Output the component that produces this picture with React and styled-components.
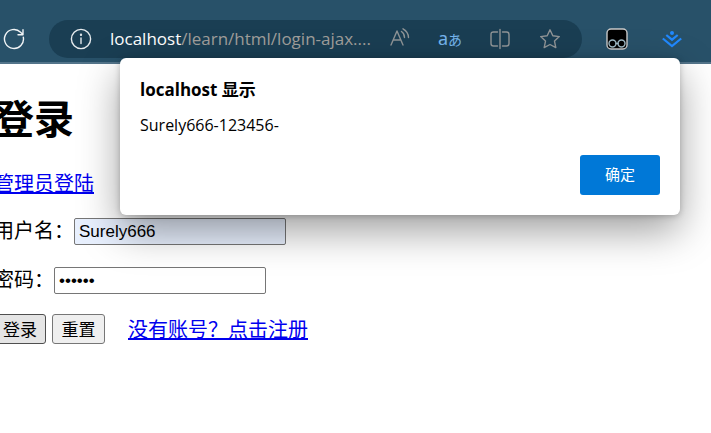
import React from "react";
import styled, { createGlobalStyle } from "styled-components";

const GlobalStyle = createGlobalStyle`
  * { box-sizing: border-box; }
  body {
    margin: 0;
    background: #fff;
    color: #000;
    font-family: "Open Sans", "Noto Sans CJK SC", sans-serif;
    overflow: hidden;
  }
`;

const Browser = styled.div`
  position: relative;
  min-height: 100vh;
`;

const Toolbar = styled.header`
  display: flex;
  align-items: center;
  height: 64px;
  padding: 16px 12px 0 0;
  background: #285169;
  border-bottom: 2px solid #53748a;
`;

const IconButton = styled.button`
  display: flex;
  flex: none;
  align-items: center;
  justify-content: center;
  width: ${(p) => p.$width}px;
  height: 38px;
  padding: 0;
  border: 0;
  background: none;
  color: ${(p) => p.$color || "#8f9496"};
`;

const AddressBar = styled.div`
  display: flex;
  flex: 1;
  align-items: center;
  min-width: 0;
  height: 38px;
  margin: 0 8px 0 21px;
  padding: 0 7px;
  border-radius: 19px;
  background: #1a3e53;
`;

const Url = styled.div`
  flex: 1;
  min-width: 0;
  margin-left: 4px;
  overflow: hidden;
  white-space: nowrap;
  font-family: "Open Sans", sans-serif;
  font-size: 17px;
  line-height: 38px;
  color: #a09e9b;
`;

const Host = styled.span`
  color: #fff;
`;

const Translate = styled.span`
  font-family: "Noto Sans", "Noto Sans CJK JP", sans-serif;
  font-size: 18px;
  line-height: 24px;
`;

const Small = styled.span`
  font-size: 14px;
`;

const Page = styled.main`
  margin-left: -6px;
  padding-top: 28px;
  font-family: "Noto Sans CJK SC", sans-serif;
  font-size: 20px;
  line-height: 26px;
`;

const Title = styled.h1`
  margin: 0 0 28px;
  font-size: 40px;
  line-height: 50px;
`;

const PageLink = styled.a`
  color: #0000ee;
  text-decoration: underline;
  text-decoration-thickness: 2px;
`;

const Form = styled.form`
  display: flex;
  flex-direction: column;
  gap: 22px;
  margin-top: 22px;
`;

const Field = styled.div`
  display: flex;
  align-items: flex-start;
  height: 27px;
  line-height: 24px;
`;

const TextInput = styled.input`
  width: 212px;
  height: 27px;
  padding: 1px 4px;
  border: 1px solid #767676;
  border-radius: 2px;
  background: ${(p) => (p.$filled ? "#e8f0fe" : "#fff")};
  color: #000;
  font-family: "Liberation Sans", sans-serif;
  font-size: 17px;
`;

const Actions = styled.div`
  display: flex;
  align-items: center;
  gap: 6px;
  margin-top: -2px;
`;

const FormButton = styled.button`
  width: ${(p) => (p.$active ? 52 : 53)}px;
  height: 30px;
  padding: 0;
  border: 1px solid ${(p) => (p.$active ? "#4f4f4f" : "#767676")};
  border-radius: 3px;
  background: ${(p) => (p.$active ? "#e5e5e5" : "#efefef")};
  color: #000;
  font-family: "Noto Sans CJK SC", sans-serif;
  font-size: 17px;
  line-height: 26px;
`;

const RegisterLink = styled(PageLink)`
  margin-left: 17px;
`;

const Overlay = styled.div`
  position: absolute;
  top: 58px;
  right: 31px;
  left: 120px;
`;

const Dialog = styled.section`
  padding: 20px;
  border-radius: 6px;
  background: #fff;
  box-shadow: 0 16px 40px rgba(0, 0, 0, 0.38), 0 1px 6px rgba(0, 0, 0, 0.22);
`;

const DialogTitle = styled.h2`
  margin: 0;
  font-size: 17px;
  line-height: 24px;
`;

const Message = styled.p`
  margin: 12px 0 19px;
  font-size: 16px;
  line-height: 22px;
`;

const DialogActions = styled.div`
  display: flex;
  justify-content: flex-end;
`;

const Confirm = styled.button`
  width: 80px;
  height: 40px;
  padding: 0 0 3px;
  border: 0;
  border-radius: 3px;
  background: #0078d7;
  color: #fff;
  font-family: "Noto Sans CJK SC", sans-serif;
  font-size: 15px;
`;

const Icon = ({ size = 22, children }) => (
  <svg
    width={size}
    height={size}
    viewBox={`0 0 ${size} ${size}`}
    fill="none"
    stroke="currentColor"
    strokeWidth="1.4"
    strokeLinecap="round"
    strokeLinejoin="round"
    aria-hidden="true"
  >
    {children}
  </svg>
);

export default function App() {
  return (
    <>
      <GlobalStyle />
      <Browser>
        <Toolbar>
          <IconButton $width={28} $color="#f1f4f6" aria-label="刷新">
            <Icon>
              <path d="M20.3 9.2A9.5 9.5 0 1 1 17.6 4.2L20 6.5M20 1.8v5h-5" />
            </Icon>
          </IconButton>
          <AddressBar>
            <IconButton $width={50} $color="#e6ebee" aria-label="站点信息">
              <Icon>
                <circle cx="11" cy="11" r="9.6" />
                <path d="M11 10v5.5" />
                <circle cx="11" cy="6.8" r=".5" fill="currentColor" />
              </Icon>
            </IconButton>
            <Url>
              <Host>localhost</Host>/learn/html/login-ajax....
            </Url>
            <IconButton $width={50} aria-label="大声朗读">
              <Icon>
                <path d="M2 17L8 3L14 17M4.200 12h7.600M12.500 3.500Q15.500 5.500 15.500 9.500M14 .8Q19.500 4 19.500 9.500" />
              </Icon>
            </IconButton>
            <IconButton $width={50} $color="#76b5ed" aria-label="翻译">
              <Translate>
                a<Small>あ</Small>
              </Translate>
            </IconButton>
            <IconButton $width={50} aria-label="分屏">
              <Icon>
                <path d="M8.500 4H4.500Q2 4 2 6.500v9Q2 18 4.500 18h4M13.500 4h4Q20 4 20 6.500v9Q20 18 17.500 18h-4M11 1.500v19" />
              </Icon>
            </IconButton>
            <IconButton $width={50} aria-label="收藏">
              <Icon>
                <path d="M11 1.800l2.800 6 6.500.8-4.800 4.500 1.300 6.500L11 16.500l-5.800 3.100 1.300-6.500L1.700 8.600l6.500-.8z" />
              </Icon>
            </IconButton>
          </AddressBar>
          <IconButton $width={54} aria-label="脚本扩展">
            <Icon>
              <rect x="1" y="1" width="20" height="20" rx="4" fill="#000" stroke="#c9c9c9" />
              <circle cx="6.500" cy="15.500" r="3.500" stroke="#9fb9c4" />
              <circle cx="15.500" cy="15.500" r="3.500" stroke="#9fb9c4" />
              <path d="M10 15.500h2" stroke="#9fb9c4" />
            </Icon>
          </IconButton>
          <IconButton $width={55} $color="#2189ff" aria-label="下载扩展">
            <Icon>
              <g strokeWidth="2.200" strokeLinecap="butt" strokeLinejoin="miter">
                <path d="M1.800 10.500L11 18l9.200-7.500M5.300 7L11 11.700 16.700 7" />
              </g>
              <circle cx="11" cy="5" r="2" fill="currentColor" stroke="none" />
            </Icon>
          </IconButton>
        </Toolbar>

        <Page>
          <Title>登录</Title>
          <PageLink href="#admin">管理员登陆</PageLink>
          <Form onSubmit={(e) => e.preventDefault()}>
            <Field>
              <label htmlFor="username">用户名：</label>
              <TextInput id="username" $filled defaultValue="Surely666" />
            </Field>
            <Field>
              <label htmlFor="password">密码：</label>
              <TextInput id="password" type="password" defaultValue="123456" />
            </Field>
            <Actions>
              <FormButton $active type="submit">登录</FormButton>
              <FormButton type="reset">重置</FormButton>
              <RegisterLink href="#register">没有账号？点击注册</RegisterLink>
            </Actions>
          </Form>
        </Page>

        <Overlay>
          <Dialog role="alertdialog" aria-labelledby="dialog-title" aria-describedby="dialog-message">
            <DialogTitle id="dialog-title">localhost 显示</DialogTitle>
            <Message id="dialog-message">Surely666-123456-</Message>
            <DialogActions>
              <Confirm type="button">确定</Confirm>
            </DialogActions>
          </Dialog>
        </Overlay>
      </Browser>
    </>
  );
}
